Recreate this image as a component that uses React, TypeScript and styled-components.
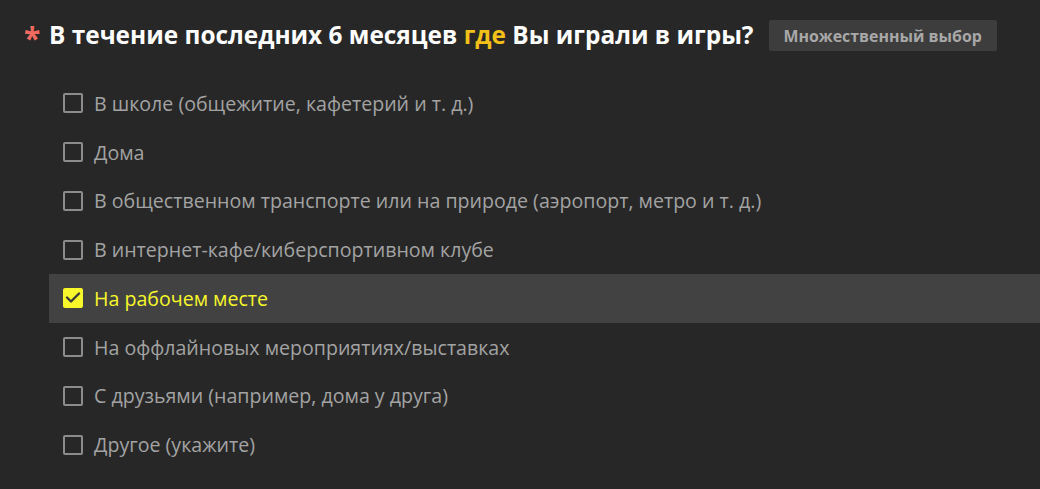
import React, { useState } from "react";
import styled, { createGlobalStyle } from "styled-components";

const Global = createGlobalStyle`
  html, body { margin: 0; padding: 0; background: #272727; }
  body { font-family: "Open Sans", "Noto Sans", sans-serif; }
`;

const Page = styled.div`
  width: 1040px;
  height: 489px;
  background: #272727;
  overflow: hidden;
`;

const Header = styled.div`
  display: flex;
  align-items: center;
  padding: 20px 0 0 24px;
  height: 31px;
`;

const Star = styled.span`
  color: #f06a5f;
  font-size: 30px;
  font-weight: 700;
  width: 25px;
  line-height: 1;
  margin-top: 4px;
`;

const Title = styled.h1`
  margin: 0;
  font-size: 24.4px;
  font-weight: 700;
  color: #ffffff;
  line-height: 31px;
  margin-top: -2px;
`;

const Accent = styled.span`
  color: #f2c018;
`;

const Badge = styled.span`
  margin-left: 15px;
  background: #3d3d3d;
  color: #a8a8a8;
  font-size: 15.9px;
  font-weight: 700;
  padding: 0 15px;
  height: 31px;
  display: inline-flex;
  align-items: center;
  border-radius: 2px;
`;

const List = styled.div`
  display: flex;
  flex-direction: column;
  padding: 28px 0 0 49px;
`;

const Row = styled.label<{ $checked: boolean }>`
  display: flex;
  align-items: center;
  height: 48.75px;
  padding-left: 14px;
  background: ${(p) => (p.$checked ? "#424242" : "transparent")};
  color: ${(p) => (p.$checked ? "#f7f72a" : "#a3a3a3")};
  font-size: 19.6px;
  cursor: pointer;
`;

const Box = styled.span<{ $checked: boolean }>`
  box-sizing: border-box;
  width: 20px;
  height: 20px;
  border-radius: 2px;
  border: ${(p) => (p.$checked ? "none" : "2px solid #8c8c8c")};
  background: ${(p) => (p.$checked ? "#f7f72a" : "transparent")};
  display: inline-flex;
  align-items: center;
  justify-content: center;
  margin-right: 11px;
  flex-shrink: 0;
`;

const options = [
  "В школе (общежитие, кафетерий и т. д.)",
  "Дома",
  "В общественном транспорте или на природе (аэропорт, метро и т. д.)",
  "В интернет-кафе/киберспортивном клубе",
  "На рабочем месте",
  "На оффлайновых мероприятиях/выставках",
  "С друзьями (например, дома у друга)",
  "Другое (укажите)",
];

export default function App() {
  const [checked, setChecked] = useState<Set<number>>(new Set([4]));
  const toggle = (i: number) => {
    const n = new Set(checked);
    if (n.has(i)) n.delete(i);
    else n.add(i);
    setChecked(n);
  };
  return (
    <Page>
      <Global />
      <Header>
        <Star>*</Star>
        <Title>
          В течение последних 6 месяцев <Accent>где</Accent> Вы играли в игры?
        </Title>
        <Badge>Множественный выбор</Badge>
      </Header>
      <List>
        {options.map((o, i) => {
          const c = checked.has(i);
          return (
            <Row key={i} $checked={c} onClick={() => toggle(i)}>
              <Box $checked={c}>
                {c && (
                  <svg width="16" height="12" viewBox="0 0 16 12">
                    <path d="M2 5.5 L6 9.5 L14 1.5" fill="none" stroke="#3a3a3a" strokeWidth="2.4" strokeLinecap="round" strokeLinejoin="round" />
                  </svg>
                )}
              </Box>
              {o}
            </Row>
          );
        })}
      </List>
    </Page>
  );
}
